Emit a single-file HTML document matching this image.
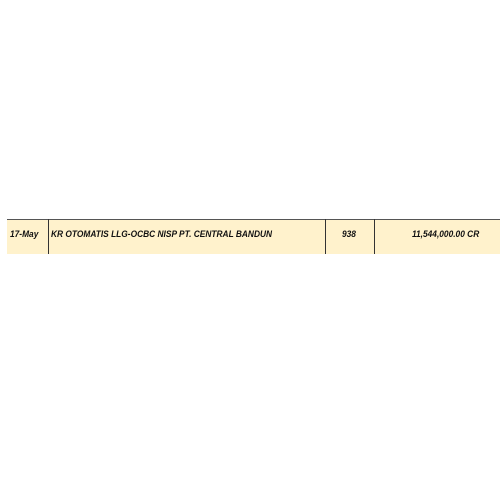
<!DOCTYPE html>
<html><head><style>
body{margin:0;width:500px;height:500px;background:#fff;position:relative;overflow:hidden;font-family:"Liberation Sans",sans-serif;}
.row{position:absolute;left:7px;right:0;top:219px;height:28px;background:#fff2cc;border-top:1px solid #555;border-bottom:1px solid #555;}
.row2{position:absolute;left:7px;right:0;top:248px;height:6px;background:#fff2cc;}
.v{position:absolute;top:219px;height:35px;width:1px;background:#333;}
.t{position:absolute;top:229px;font-size:9.5px;font-weight:bold;font-style:italic;color:#111;white-space:nowrap;line-height:12px;transform:scaleX(0.88);transform-origin:left;}
</style></head><body>
<div class="row"></div><div class="row2"></div>
<div class="v" style="left:48px"></div>
<div class="v" style="left:325px"></div>
<div class="v" style="left:374px"></div>
<div class="t" style="left:10px">17-May</div>
<div class="t" style="left:51px">KR OTOMATIS LLG-OCBC NISP PT. CENTRAL BANDUN</div>
<div class="t" style="left:342px">938</div>
<div class="t" style="left:412px">11,544,000.00 CR</div>
</body></html>
